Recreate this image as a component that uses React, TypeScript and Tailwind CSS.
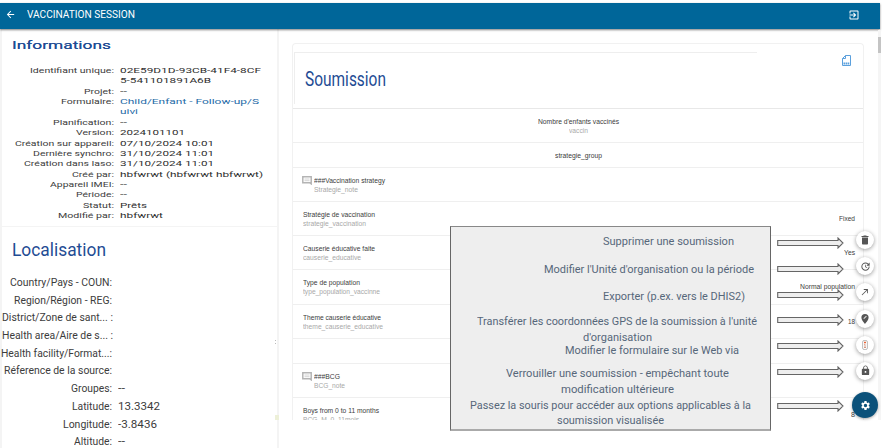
import React, { useLayoutEffect, useRef, useState } from "react";
import { MdArrowBack, MdExitToApp, MdDelete, MdUpdate, MdCallMade, MdLock, MdSettings } from "react-icons/md";

/* Single line of text stretched or condensed to a given width. */
function Fit({ w, children }: { w: number; children: string }) {
  const ref = useRef<HTMLSpanElement>(null);
  const [k, setK] = useState(1);
  useLayoutEffect(() => {
    if (ref.current) setK(w / parseFloat(getComputedStyle(ref.current).width));
  }, [w, children]);
  return (
    <span className="inline-block whitespace-nowrap text-left align-top" style={{ width: w }}>
      <span ref={ref} className="inline-block origin-left whitespace-nowrap align-top" style={{ transform: `scaleX(${k})` }}>
        {children}
      </span>
    </span>
  );
}

type Pair = [string, number, string, number, boolean?];

const infos: Pair[] = [
  ["Identifiant unique:", 84, "02E59D1D-93CB-41F4-8CF", 141],
  ["", 0, "5-541101891A6B", 91],
  ["Projet:", 30, "--", 7],
  ["Formulaire:", 53, "Child/Enfant - Follow-up/S", 139, true],
  ["", 0, "uivi", 18, true],
  ["Planification:", 61, "--", 7],
  ["Version:", 38, "2024101101", 65],
  ["Création sur appareil:", 99, "07/10/2024 10:01", 94],
  ["Dernière synchro:", 81, "31/10/2024 11:01", 94],
  ["Création dans Iaso:", 90, "31/10/2024 11:01", 94],
  ["Créé par:", 42, "hbfwrwt (hbfwrwt hbfwrwt)", 143],
  ["Appareil IMEI:", 64, "--", 7],
  ["Période:", 38, "--", 7],
  ["Statut:", 31, "Prêts", 27],
  ["Modifié par:", 56, "hbfwrwt", 43],
];

const places: Pair[] = [
  ["Country/Pays - COUN:", 102, "", 0],
  ["Region/Région - REG:", 98, "", 0],
  ["District/Zone de sant...  :", 111, "", 0],
  ["Health area/Aire de s...  :", 111, "", 0],
  ["Health facility/Format...:", 111, "", 0],
  ["Réference de la source:", 108, "", 0],
  ["Groupes:", 41, "--", 7],
  ["Latitude:", 40, "13.3342", 42],
  ["Longitude:", 49, "-3.8436", 39],
  ["Altitude:", 38, "--", 7],
];

type Row = { h: string; t?: string; tw?: number; s?: string; sw?: number; note?: boolean; v?: string; vw?: number };

const rows: Row[] = [
  { h: "h-[34px]", t: "###Vaccination strategy", tw: 71, s: "Strategie_note", sw: 44, note: true },
  { h: "h-[34px]", t: "Stratégie de vaccination", tw: 72, s: "strategie_vaccination", sw: 63, v: "Fixed", vw: 16 },
  { h: "h-[34px]", t: "Causerie éducative faite", tw: 72, s: "causerie_educative", sw: 58, v: "Yes", vw: 11 },
  { h: "h-[35px]", t: "Type de population", tw: 57, s: "type_population_vaccinne", sw: 77, v: "Normal population", vw: 55 },
  { h: "h-[34px]", t: "Theme causerie éducative", tw: 78, s: "theme_causerie_educative", sw: 80, v: "18", vw: 7 },
  { h: "h-[25px]" },
  { h: "h-[34px]", t: "###BCG", tw: 26, s: "BCG_note", sw: 31, note: true },
  { h: "h-[34px]", t: "Boys from 0 to 11 months", tw: 76, s: "BCG_M_0_11mois", sw: 56, v: "8", vw: 4 },
];

function Arrow({ top }: { top: string }) {
  return (
    <svg className={`absolute left-[777px] ${top}`} width="67" height="12" viewBox="0 0 67 12">
      <path d="M.7 3.500H61V1l5 5-5 5V8.500H.7Z" fill="#eee" stroke="#666" strokeWidth="1.1" />
    </svg>
  );
}

function Fab({ children }: { children: React.ReactNode }) {
  return (
    <div className="flex h-[18px] w-[18px] items-center justify-center rounded-full bg-white text-[#555] shadow-[0_1px_4px_rgba(0,0,0,0.4)]">
      {children}
    </div>
  );
}

function NoteIcon() {
  return (
    <svg className="-ml-[1px] mr-[2px] mt-[8px] shrink-0" width="10" height="9" viewBox="0 0 10 9" fill="none">
      <path d="M.8.8h8.400v7L8 6.800H.8Z" stroke="#b4b4b4" strokeWidth="1.500" />
      <path d="M2.500 3h5M2.500 4.700h5" stroke="#c8c8c8" strokeWidth=".8" />
    </svg>
  );
}

export default function App() {
  return (
    <div className="relative h-[448px] w-[882px] overflow-hidden bg-white pt-[3px] font-['Roboto','Liberation_Sans',sans-serif] text-[#3c3c3c]">
      <header className="relative flex h-[26px] w-[880px] items-center bg-[#006699] pb-[3px] text-white shadow-[0_1px_2px_rgba(0,0,0,0.5)]">
        <MdArrowBack className="ml-[5px] h-[11px] w-[11px]" />
        <h1 className="ml-[11px] text-[10px] leading-[14px]"><Fit w={108}>VACCINATION SESSION</Fit></h1>
        <MdExitToApp className="ml-auto mr-[20px] h-[12px] w-[12px]" />
      </header>

      <main className="flex h-[419px]">
        <aside className="w-[279px] shrink-0">
          <section className="h-[198px] border-x-2 border-b border-[#f4f4f4] pt-[7px]">
            <h2 className="pl-[10px] text-[11.500px] leading-[18px] text-[#1f4c94] [text-shadow:0_0_0.4px_currentColor]"><Fit w={99}>Informations</Fit></h2>
            <div className="mt-[12px]">
              {infos.map(([l, lw, v, vw, link], i) => (
                <div key={i} className="flex h-[10.36px] text-[7px] leading-[10.36px]">
                  <div className="w-[112px] text-right">{l && <Fit w={lw}>{l}</Fit>}</div>
                  <div className={link ? "ml-[6px] text-[7.300px] text-[#1f6ca8]" : "ml-[6px] text-[7.300px] text-[#2e2e2e]"}>
                    <Fit w={vw}>{v}</Fit>
                  </div>
                </div>
              ))}
            </div>
          </section>
          <section className="h-[221px] border-x-2 border-[#f4f4f4] pt-[12px]">
            <h2 className="pl-[10px] text-[18px] leading-[22px] text-[#1f4c94]"><Fit w={94}>Localisation</Fit></h2>
            <div className="mt-[13px]">
              {places.map(([l, lw, v, vw]) => (
                <div key={l} className="flex h-[17.7px] text-[10.300px] leading-[17.7px]">
                  <div className="flex w-[110px] justify-end"><Fit w={lw}>{l}</Fit></div>
                  <div className="ml-[6px] text-[11px]">{v && <Fit w={vw}>{v}</Fit>}</div>
                </div>
              ))}
            </div>
          </section>
        </aside>

        <section className="ml-[13px] mt-[14px] h-[377px] w-[572px] shrink-0 overflow-hidden rounded-t border-x border-t border-[#f1f1f1] font-['Liberation_Sans',sans-serif]">
          <div className="flex h-[65px] items-start border-b border-[#e8e8e8] pl-[1px] pt-[8px]">
            <div className="h-[52px] w-[463px] border-l border-t border-[#eeeeee] pl-[10px] pt-[14px]">
              <h2 className="font-['Roboto',sans-serif] text-[20px] leading-[24px] text-[#1f4c94]"><Fit w={81}>Soumission</Fit></h2>
            </div>
            <svg className="ml-auto mr-[12px] mt-[3px]" width="9" height="11" viewBox="0 0 9 11" fill="none" stroke="#5ba0dd">
              <path d="M3.500.5h5v10h-8v-7Z M3.500.5v3h-3" />
              <path d="M1.500 8.500h6" strokeWidth="2" strokeDasharray="1.600 .5" />
            </svg>
          </div>
          <div className="h-[34px] border-b border-[#efefef] pt-[8px] text-center text-[7px] leading-[9px]">
            <div className="pl-px"><Fit w={81}>Nombre d'enfants vaccinés</Fit></div>
            <div className="pl-px text-[#aaa]"><Fit w={19}>vaccin</Fit></div>
          </div>
          <div className="h-[25px] border-b border-[#efefef] pl-px pt-[8px] text-center text-[7px] leading-[9px]"><Fit w={47}>strategie_group</Fit></div>
          {rows.map((r, i) => (
            <div key={i} className={`flex items-start border-b border-[#efefef] pl-[10px] pr-[8px] text-[7px] leading-[9px] ${r.h}`}>
              {r.note && <NoteIcon />}
              {r.t && (
                <div className="pt-[8px]">
                  <div><Fit w={r.tw!}>{r.t}</Fit></div>
                  <div className="text-[#a8a8a8]"><Fit w={r.sw!}>{r.s!}</Fit></div>
                </div>
              )}
              {r.v && <div className="ml-auto pt-[12px]"><Fit w={r.vw!}>{r.v}</Fit></div>}
            </div>
          ))}
        </section>
      </main>

      <div className="absolute left-[878px] top-[30px] h-[390px] w-[3px] bg-[#f5f5f5]">
        <div className="mt-[7px] h-[16px] w-[3px] bg-[#c4c4c4]" />
      </div>
      <div className="absolute left-[275px] top-[415px] h-[5px] w-[4px] bg-[#edf0d8]" />
      <div className="absolute left-[275px] top-[340px] h-[4px] w-px border-y border-[#bbb]" />

      <div className="absolute left-[450px] top-[226px] h-[205px] w-[321px] border border-b-2 border-[#666] border-b-[#aaa] border-t-[#888] bg-[#eee] pt-[7px] text-[11.500px] leading-[15px] text-[#56677a]">
        <div className="pl-[152px]"><Fit w={131}>Supprimer une soumission</Fit></div>
        <div className="mt-[13px] pl-[93px]"><Fit w={210}>Modifier l'Unité d'organisation ou la période</Fit></div>
        <div className="mt-[12px] pl-[152px]"><Fit w={142}>Exporter (p.ex. vers le DHIS2)</Fit></div>
        <div className="mt-[10px] pl-[26px]"><Fit w={280}>Transférer les coordonnées GPS de la soumission à l'unité</Fit></div>
        <div className="mt-[1px] pl-[132px]"><Fit w={69}>d'organisation</Fit></div>
        <div className="-mt-[2px] pl-[114px]"><Fit w={174}>Modifier le formulaire sur le Web via</Fit></div>
        <div className="mt-[8px] pl-[55px]"><Fit w={223}>Verrouiller une soumission - empêchant toute</Fit></div>
        <div className="mt-[1px] pl-[110px]"><Fit w={113}>modification ultérieure</Fit></div>
        <div className="mt-[1px] pl-[19px]"><Fit w={281}>Passez la souris pour accéder aux options applicables à la</Fit></div>
        <div className="pl-[106px]"><Fit w={107}>soumission visualisée</Fit></div>
      </div>

      <Arrow top="top-[237px]" />
      <Arrow top="top-[263px]" />
      <Arrow top="top-[289px]" />
      <Arrow top="top-[314px]" />
      <Arrow top="top-[340px]" />
      <Arrow top="top-[366px]" />
      <Arrow top="top-[400px]" />

      <div className="absolute left-[851px] top-[231px] flex w-[28px] flex-col items-center gap-[8.200px]">
        <Fab><MdDelete className="h-[12px] w-[12px]" /></Fab>
        <Fab><MdUpdate className="h-[11px] w-[11px]" /></Fab>
        <Fab><MdCallMade className="h-[10px] w-[10px]" /></Fab>
        <Fab>
          <svg width="8" height="10" viewBox="0 0 8 10">
            <path d="M4 0a3.600 3.600 0 0 0-3.600 3.600C.4 6.300 4 10 4 10s3.600-3.700 3.600-6.400A3.600 3.600 0 0 0 4 0Z" fill="#555" />
            <path d="m2.500 5 .2-1 2.300-2.300.8.8L3.500 4.800Z" fill="#ddd" />
          </svg>
        </Fab>
        <Fab>
          <svg width="6" height="10" viewBox="0 0 6 10" fill="none">
            <rect x=".6" y=".5" width="4.800" height="9" rx="1.500" stroke="#aaa" strokeWidth=".8" />
            <path d="M2 2.500h2" stroke="#e86638" strokeWidth="1.300" />
            <path d="M2.200 4.300H3v3M2 7.500h2" stroke="#c98068" strokeWidth=".8" />
          </svg>
        </Fab>
        <Fab><MdLock className="h-[11px] w-[11px]" /></Fab>
      </div>
      <div className="absolute left-[852px] top-[392px] flex h-[26px] w-[26px] items-center justify-center rounded-full bg-[#0b517a] text-white shadow-[0_1px_3px_rgba(0,0,0,0.35)]">
        <MdSettings className="h-[11px] w-[11px]" />
      </div>
    </div>
  );
}
